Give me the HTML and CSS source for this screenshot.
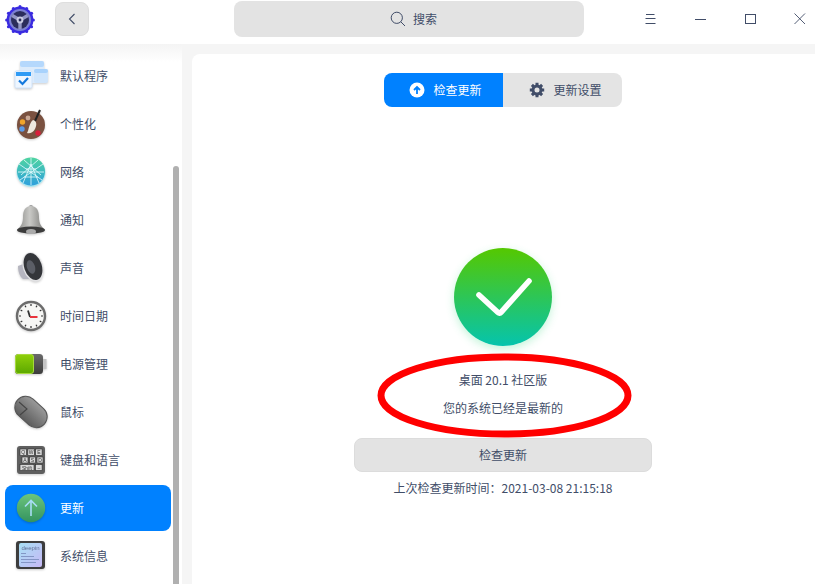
FILE: index.html
```html
<!DOCTYPE html>
<html lang="zh-CN">
<head>
    <meta charset="UTF-8">
    <title>控制中心</title>
    <link rel="stylesheet" href="styles.css">
</head>
<body>

<header class="titlebar">
    <svg class="app-logo" viewBox="0 0 30 30">
        <circle cx="15" cy="15" r="13.4" fill="#3a2be0"/>
        <g fill="#3a2be0">
            <circle cx="15" cy="1.6" r="1.5"/><circle cx="21.7" cy="3.4" r="1.5"/><circle cx="26.6" cy="8.3" r="1.5"/>
            <circle cx="28.4" cy="15" r="1.5"/><circle cx="26.6" cy="21.7" r="1.5"/><circle cx="21.7" cy="26.6" r="1.5"/>
            <circle cx="15" cy="28.4" r="1.5"/><circle cx="8.3" cy="26.6" r="1.5"/><circle cx="3.4" cy="21.7" r="1.5"/>
            <circle cx="1.6" cy="15" r="1.5"/><circle cx="3.4" cy="8.3" r="1.5"/><circle cx="8.3" cy="3.4" r="1.5"/>
        </g>
        <circle cx="15" cy="15" r="11" fill="#7c80d2"/>
        <circle cx="15" cy="15" r="9" fill="#2b2d5c"/>
        <path d="M15 15V24M15 15L7.2 10.5M15 15L22.8 10.5" stroke="#9396c4" stroke-width="3.4"/>
        <circle cx="15" cy="15" r="3.4" fill="#c9cbe2"/>
        <circle cx="15" cy="15" r="1.4" fill="#2b2d5c"/>
    </svg>
    <button class="back-btn">
        <svg width="8" height="12" viewBox="0 0 8 12"><path d="M6.5 1L1.5 6L6.5 11" fill="none" stroke="#414d68" stroke-width="1.1"/></svg>
    </button>
    <div class="search">
        <svg width="16" height="16" viewBox="0 0 16 16"><circle cx="6.8" cy="6.8" r="5.6" fill="none" stroke="#414d68" stroke-width="1"/><path d="M10.8 10.8L15 15" stroke="#414d68" stroke-width="1"/></svg>
        <span>搜索</span>
    </div>
    <div class="win-btns">
        <svg width="12" height="12" viewBox="0 0 12 12"><path d="M1 1.5H9.5M0.5 5.5H10.5M0.5 10.5H10.5" stroke="#414d68" stroke-width="1"/></svg>
        <svg width="12" height="12" viewBox="0 0 12 12"><path d="M0 6.5H11" stroke="#414d68" stroke-width="1"/></svg>
        <svg width="12" height="12" viewBox="0 0 12 12"><rect x="0.5" y="1.5" width="10" height="9" fill="none" stroke="#414d68" stroke-width="1"/></svg>
        <svg class="win-close" width="12" height="12" viewBox="0 0 12 12"><path d="M0.5 0.5L11 11M11 0.5L0.5 11" stroke="#414d68" stroke-width="0.9"/></svg>
    </div>
</header>

<div class="content">
    <aside class="sidebar">
        <div class="nav-item">
            <svg class="nav-icon" viewBox="0 0 34 34">
                <rect x="6" y="2" width="24" height="22" rx="2" fill="#dcebfb"/>
                <rect x="6" y="2" width="24" height="6" rx="2" fill="#b5d8fc"/>
                <rect x="20" y="10" width="14" height="14" rx="2" fill="#cfe5fc"/>
                <rect x="20" y="10" width="14" height="4" rx="2" fill="#a8d2fc"/>
                <rect x="1" y="12" width="17" height="17" rx="1.5" fill="#eef6ff" stroke="#cfe3fa"/>
                <rect x="2" y="13" width="15" height="4" fill="#2f9bf5"/>
                <path d="M5 21.5L8.5 25L14 19" fill="none" stroke="#1479dd" stroke-width="2.2"/>
            </svg>
            <span>默认程序</span>
        </div>
        <div class="nav-item">
            <svg class="nav-icon" viewBox="0 0 34 34">
                <circle cx="17" cy="18" r="14" fill="#7a5140"/>
                <circle cx="8.5" cy="15" r="2.7" fill="#f0a42a"/>
                <circle cx="14" cy="11" r="2.4" fill="#c9a896"/>
                <circle cx="8" cy="22" r="2.7" fill="#5b9be8"/>
                <circle cx="24" cy="26" r="2.7" fill="#d81e3c"/>
                <path d="M26 3L21 14" stroke="#222" stroke-width="2"/>
                <path d="M19 13C23 14 23 18 21 22C19 26 15 27 13 26C15 23 15 16 19 13Z" fill="#efe9df"/>
            </svg>
            <span>个性化</span>
        </div>
        <div class="nav-item">
            <svg class="nav-icon" viewBox="0 0 34 34">
                <defs><linearGradient id="netg" x1="0" y1="0" x2="0" y2="1"><stop offset="0" stop-color="#4fd5a0"/><stop offset="1" stop-color="#2fa0dd"/></linearGradient></defs>
                <circle cx="17" cy="17.5" r="14.5" fill="#8ff0ff" opacity=".6"/>
                <circle cx="17" cy="16.5" r="14" fill="url(#netg)"/>
                <path d="M17 3V30M5 9L28 25M29 9L6 25M17 9L9 28M17 9L25 28M4 17H30M10 5L27 20M24 5L7 20M12 14L22 14M10 22H24" stroke="#e8fbff" stroke-width=".8" fill="none"/>
            </svg>
            <span>网络</span>
        </div>
        <div class="nav-item">
            <svg class="nav-icon" viewBox="0 0 34 34">
                <defs><linearGradient id="bellg" x1="0" y1="0" x2="1" y2="0"><stop offset="0" stop-color="#8f8f8c"/><stop offset=".45" stop-color="#c9c9c6"/><stop offset="1" stop-color="#7f7f7c"/></linearGradient></defs>
                <circle cx="17" cy="4" r="2" fill="#999"/>
                <path d="M17 3C11 3 9 8 9 14C9 20 7 23 4 26H30C27 23 25 20 25 14C25 8 23 3 17 3Z" fill="url(#bellg)"/>
                <ellipse cx="17" cy="27" rx="14" ry="3.6" fill="#3c3c3c"/>
                <ellipse cx="17" cy="28.5" rx="5" ry="2.6" fill="#aaa"/>
            </svg>
            <span>通知</span>
        </div>
        <div class="nav-item">
            <svg class="nav-icon" viewBox="0 0 34 34">
                <path d="M4 15L12 12L17 28L9 28C6 26 4 21 4 15Z" fill="#b6b6c0"/>
                <ellipse cx="19" cy="16" rx="10" ry="15" transform="rotate(-18 19 16)" fill="#e2e2e4"/>
                <ellipse cx="19" cy="15.5" rx="8.8" ry="14" transform="rotate(-18 19 15.5)" fill="#34363a"/>
                <ellipse cx="17" cy="16" rx="4" ry="7" transform="rotate(-18 17 16)" fill="#5b5e66"/>
            </svg>
            <span>声音</span>
        </div>
        <div class="nav-item">
            <svg class="nav-icon" viewBox="0 0 34 34">
                <circle cx="17" cy="17" r="14" fill="#f6f6f4" stroke="#6c6c6c" stroke-width="2.4"/>
                <path d="M17 5V7M17 27V29M5 17H7M27 17H29M11 6.6L12 8.3M23 6.6L22 8.3M11 27.4L12 25.7M23 27.4L22 25.7M6.6 11L8.3 12M27.4 11L25.7 12M6.6 23L8.3 22M27.4 23L25.7 22" stroke="#333" stroke-width="1.2"/>
                <path d="M14 11.5L16 18" stroke="#333" stroke-width="1.8"/>
                <path d="M16 18H23.5" stroke="#e8333c" stroke-width="2"/>
            </svg>
            <span>时间日期</span>
        </div>
        <div class="nav-item">
            <svg class="nav-icon" viewBox="0 0 34 34">
                <defs>
                    <linearGradient id="batg" x1="0" y1="0" x2="0" y2="1"><stop offset="0" stop-color="#8fcf0a"/><stop offset="1" stop-color="#5ca800"/></linearGradient>
                    <linearGradient id="batd" x1="0" y1="0" x2="0" y2="1"><stop offset="0" stop-color="#6a6a6a"/><stop offset="1" stop-color="#3c3c3c"/></linearGradient>
                </defs>
                <rect x="28.5" y="12" width="4" height="10" fill="#c4c4c4"/>
                <rect x="1" y="7" width="28" height="20" rx="3.5" fill="url(#batd)"/>
                <rect x="1.5" y="7.5" width="18" height="19" rx="2.5" fill="url(#batg)" stroke="#a6d93d"/>
            </svg>
            <span>电源管理</span>
        </div>
        <div class="nav-item">
            <svg class="nav-icon" viewBox="0 0 34 34">
                <defs><linearGradient id="mouseg" x1="0" y1="0" x2="0" y2="1"><stop offset="0" stop-color="#9a9a9a"/><stop offset="1" stop-color="#5c5c5c"/></linearGradient></defs>
                <rect x="-1" y="6" width="36" height="22" rx="11" transform="rotate(42 17 17)" fill="url(#mouseg)" stroke="#555"/>
                <path d="M5 7L13 14L6 20" fill="none" stroke="#444" stroke-width="1.1"/>
            </svg>
            <span>鼠标</span>
        </div>
        <div class="nav-item">
            <svg class="nav-icon" viewBox="0 0 34 34">
                <rect x="3" y="3" width="28" height="28" rx="3" fill="#5f5f5f"/>
                <g fill="#d8d8d8" stroke="#2c2c2c" stroke-width=".6">
                    <rect x="6" y="6" width="6.5" height="6.5"/><rect x="13.8" y="6" width="6.5" height="6.5"/><rect x="21.6" y="6" width="6.5" height="6.5"/>
                    <rect x="8" y="14" width="6" height="6"/><rect x="15.5" y="14" width="6" height="6"/><rect x="23" y="14" width="6" height="6"/>
                    <rect x="6" y="21.5" width="14" height="6"/><rect x="21.6" y="21.5" width="6.5" height="6"/>
                </g>
                <g class="key-text">
                    <text x="9.2" y="11.2">Q</text><text x="17" y="11.2">W</text><text x="24.8" y="11.2">E</text>
                    <text x="11" y="19">A</text><text x="18.5" y="19">S</text><text x="26" y="19">D</text>
                    <text x="13" y="26.5">Shift</text><text x="24.8" y="26.5">–</text>
                </g>
            </svg>
            <span>键盘和语言</span>
        </div>
        <div class="nav-item active">
            <svg class="nav-icon" viewBox="0 0 34 34">
                <defs><linearGradient id="updg" x1="0" y1="0" x2="0" y2="1"><stop offset="0" stop-color="#6cc57c"/><stop offset="1" stop-color="#34935f"/></linearGradient></defs>
                <circle cx="17" cy="17" r="14.2" fill="url(#updg)"/>
                <path d="M17 25V10M11 15.5L17 9.5L23 15.5" fill="none" stroke="#a8dcf4" stroke-width="1.6"/>
            </svg>
            <span>更新</span>
        </div>
        <div class="nav-item">
            <svg class="nav-icon" viewBox="0 0 34 34">
                <defs><linearGradient id="infog" x1="0" y1="0" x2="1" y2="1"><stop offset="0" stop-color="#a8e0f5"/><stop offset="1" stop-color="#c6b8f5"/></linearGradient></defs>
                <rect x="2" y="2" width="29" height="28" rx="3" fill="#3d3d3d"/>
                <rect x="5" y="4" width="23" height="24" rx="2" fill="url(#infog)"/>
                <text class="info-text" x="16.5" y="11">deepin</text>
                <path d="M7 14.5H12M7 17.5H20M7 20.5H25M7 23.5H22" stroke="#7e90c0" stroke-width=".9"/>
            </svg>
            <span>系统信息</span>
        </div>
        <div class="scrollbar"></div>
    </aside>

    <main class="panel">
        <div class="tabs">
            <div class="tab tab-on">
                <svg width="16" height="16" viewBox="0 0 16 16"><circle cx="8" cy="8" r="7.5" fill="#fff"/><path d="M8 12V5M5 8L8 5L11 8" fill="none" stroke="#0081ff" stroke-width="1.8"/></svg>
                <span>检查更新</span>
            </div>
            <div class="tab tab-off">
                <svg width="16" height="16" viewBox="0 0 16 16"><path d="M8 0.8V3.5M8 12.5V15.2M0.8 8H3.5M12.5 8H15.2M2.9 2.9L4.8 4.8M11.2 11.2L13.1 13.1M13.1 2.9L11.2 4.8M4.8 11.2L2.9 13.1" stroke="#414d68" stroke-width="3"/><circle cx="8" cy="8" r="4" fill="none" stroke="#414d68" stroke-width="3"/></svg>
                <span>更新设置</span>
            </div>
        </div>

        <div class="status-ok">
            <svg width="58" height="40" viewBox="0 0 58 40"><path d="M4 18L23 35.5C24 36.4 25.2 36.3 26 35.4L54 4" fill="none" stroke="#fff" stroke-width="5.6" stroke-linecap="round" stroke-linejoin="round"/></svg>
        </div>
        <p class="version">桌面 20.1 社区版</p>
        <p class="uptodate">您的系统已经是最新的</p>
        <button class="check-btn"><span>检查更新</span></button>
        <p class="last-check">上次检查更新时间：2021-03-08 21:15:18</p>

        <svg class="mark" width="258" height="87" viewBox="0 0 258 87"><ellipse cx="128.5" cy="43.5" rx="123.5" ry="38.5" fill="none" stroke="#f00" stroke-width="7"/></svg>
    </main>
</div>

</body>
</html>
```

FILE: styles.css
```css
html, body {
    height: 100%;
}

body {
    margin: 0;
    display: flex;
    flex-direction: column;
    overflow: hidden;
    font-family: "Noto Sans CJK SC", "Noto Sans", sans-serif;
    font-size: 12px;
    color: #414d68;
    background-color: #f5f5f5;
}

.titlebar {
    flex: 0 0 44px;
    display: flex;
    align-items: center;
    background-color: #fff;
}

.app-logo {
    width: 30px;
    height: 30px;
    margin: -4px 0 0 5px;
}

.back-btn {
    width: 34px;
    height: 34px;
    margin: -6px 0 0 20px;
    display: flex;
    align-items: center;
    justify-content: center;
    padding: 0;
    border: 1px solid #dedede;
    border-radius: 8px;
    background-color: #e6e6e6;
}

.search {
    box-sizing: border-box;
    width: 350px;
    height: 36px;
    margin: -7px 0 0 145px;
    padding-left: 9px;
    display: flex;
    align-items: center;
    justify-content: center;
    gap: 7px;
    border-radius: 8px;
    background-color: #e3e3e3;
}

.win-btns {
    display: flex;
    gap: 38px;
    margin: -7px 0 0 61px;
}

.win-close {
    margin-left: -1px;
}

.content {
    flex: 1;
    display: flex;
    min-height: 0;
}

.sidebar {
    position: relative;
    flex: 0 0 182px;
    box-sizing: border-box;
    padding: 9px 11px 0 5px;
    display: flex;
    flex-direction: column;
    gap: 2px;
    background: linear-gradient(#f4f4f4, #fff 18px);
}

.nav-item {
    flex: 0 0 46px;
    display: flex;
    align-items: center;
    gap: 12px;
    padding-left: 10px;
    border-radius: 8px;
}

.nav-item span, .tab span {
    padding-bottom: 2px;
}

.nav-item.active {
    background-color: #0081ff;
    color: #fff;
}

.nav-icon {
    width: 34px;
    height: 34px;
    flex: none;
    margin-left: -1px;
    filter: drop-shadow(0 1px 1px rgba(0, 0, 0, 0.2));
}

.key-text {
    font-family: "Liberation Sans", sans-serif;
    font-size: 5px;
    text-anchor: middle;
    fill: #333;
}

.info-text {
    font-family: "Liberation Sans", sans-serif;
    font-size: 6px;
    text-anchor: middle;
    fill: #5f7196;
}

.scrollbar {
    position: absolute;
    top: 122px;
    right: 3px;
    bottom: 0;
    width: 6px;
    border-radius: 3px 3px 0 0;
    background-color: #b0b0b0;
}

.panel {
    position: relative;
    flex: 1;
    margin: 10px 0 0 10px;
    padding-right: 1px;
    display: flex;
    flex-direction: column;
    align-items: center;
    border-radius: 8px 0 0 0;
    background-color: #fff;
}

.tabs {
    width: 238px;
    height: 34px;
    margin-top: 19px;
    display: flex;
    border-radius: 8px;
    overflow: hidden;
}

.tab {
    flex: 1;
    display: flex;
    align-items: center;
    justify-content: center;
    gap: 8px;
    background-color: #e4e4e4;
}

.tab-on {
    flex: 0 0 119px;
    box-sizing: border-box;
    padding-left: 4px;
    background-color: #0081ff;
    color: #fff;
}

.tab-off {
    padding-left: 6px;
}

.status-ok {
    width: 98px;
    height: 98px;
    margin-top: 141px;
    display: flex;
    align-items: center;
    justify-content: center;
    border-radius: 50%;
    background: linear-gradient(#55c800, #05c4ad);
    box-shadow: 0 3px 8px rgba(60, 220, 130, 0.3);
}

.status-ok svg {
    margin-left: 2px;
}

.version, .uptodate, .last-check {
    margin: 0;
    line-height: 16px;
}

.version {
    margin-top: 26px;
}

.uptodate {
    margin-top: 12px;
}

.check-btn {
    width: 298px;
    height: 34px;
    margin-top: 22px;
    padding: 0 0 2px;
    border: 1px solid #dcdcdc;
    border-radius: 8px;
    background-color: #e3e3e3;
    color: #414d68;
    font: inherit;
}

.last-check {
    margin-top: 8px;
}

.mark {
    position: absolute;
    left: 184px;
    top: 298px;
}
```
